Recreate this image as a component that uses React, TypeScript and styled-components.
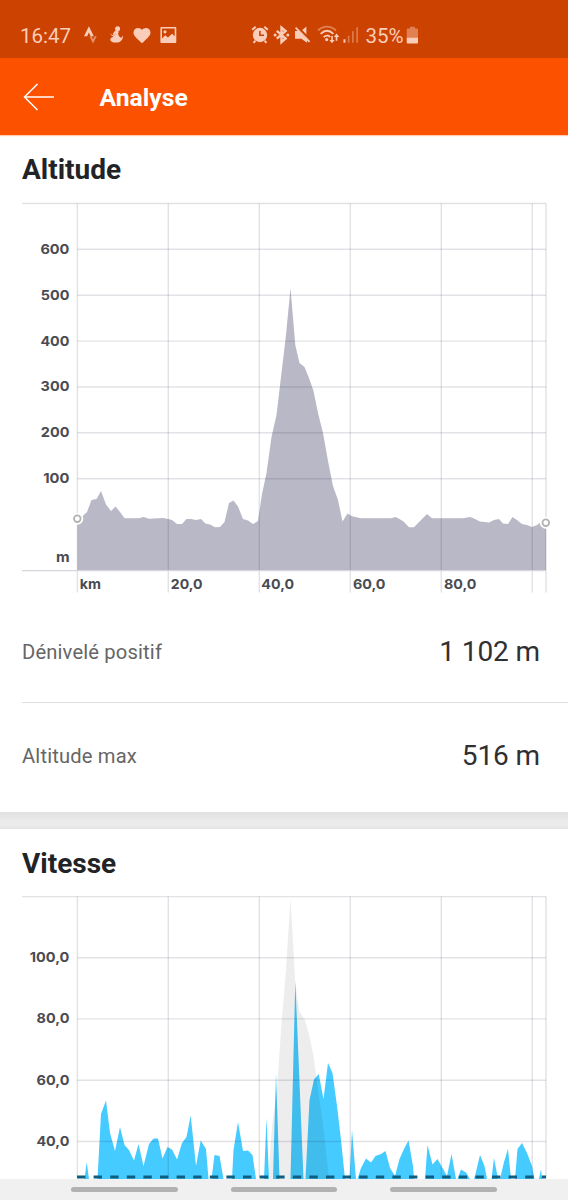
import React from 'react';
import styled, { createGlobalStyle } from 'styled-components';

const GlobalStyle = createGlobalStyle`
  * { box-sizing: border-box; }
  body { margin: 0; background: #fff; }
`;

const INK = '#f9cdb9';

const Screen = styled.div`
  width: 568px;
  height: 1200px;
  overflow: hidden;
  display: flex;
  flex-direction: column;
  background: #fff;
  font-family: Roboto, 'Liberation Sans', sans-serif;
`;

const StatusBar = styled.header`
  flex: 0 0 58px;
  display: flex;
  align-items: flex-start;
  padding: 24px 0 0 20px;
  background: #cc4200;
  color: ${INK};
`;

const StatusText = styled.span<{ $width: number; $gap?: number }>`
  width: ${(p) => p.$width}px;
  margin-left: ${(p) => p.$gap ?? 0}px;
  font-size: 20.5px;
  line-height: 25px;
  white-space: nowrap;
`;

const StatusIcon = styled.svg<{ $gap: number }>`
  display: block;
  flex: none;
  height: 22px;
  margin-left: ${(p) => p.$gap}px;
  fill: ${INK};
`;

const AppBar = styled.div`
  flex: 0 0 77px;
  display: flex;
  align-items: center;
  padding-left: 23px;
  background: #fc5200;
  color: #fff;
  box-shadow: 0 1px 1px rgba(252, 82, 0, 0.3);
`;

const BackArrow = styled.svg`
  width: 32px;
  height: 30px;
  fill: none;
  stroke: #fff;
  stroke-width: 1.5;
`;

const AppTitle = styled.h1`
  margin: 3px 0 0 44.5px;
  font-size: 24.7px;
  line-height: 30px;
  font-weight: 700;
`;

const Section = styled.section<{ $height?: number }>`
  flex: none;
  height: ${(p) => (p.$height ? `${p.$height}px` : 'auto')};
  overflow: hidden;
`;

const SectionTitle = styled.h2<{ $height: number }>`
  height: ${(p) => p.$height}px;
  margin: 0;
  padding: 18px 0 0 22px;
  font-size: 28px;
  line-height: 33px;
  font-weight: 700;
  color: #222326;
`;

const Chart = styled.svg`
  display: block;
  width: 568px;
  overflow: visible;
`;

const AxisText = styled.text`
  font: 700 13.6px Inter, 'Liberation Sans', sans-serif;
  fill: #4a4b52;
`;

const StatRow = styled.div<{ $divided?: boolean }>`
  height: ${(p) => (p.$divided ? 107 : 109)}px;
  margin-left: 22px;
  padding: ${(p) => (p.$divided ? '5px 28px 0 0' : '0 28px 4px 0')};
  display: flex;
  justify-content: space-between;
  align-items: center;
  border-bottom: ${(p) => (p.$divided ? '1px solid #dfdfdf' : '0')};
`;

const StatLabel = styled.span`
  font-size: 20.2px;
  letter-spacing: 0.15px;
  color: #666;
`;

const StatValue = styled.span`
  font-size: 28px;
  letter-spacing: -0.1px;
  color: #303033;
`;

const Band = styled.div`
  flex: 0 0 17px;
  background: linear-gradient(#e1e1e1, #ebebeb 55%, #ebebeb 80%, #e3e3e3);
`;

const NavBar = styled.nav`
  flex: 0 0 21px;
  display: flex;
  justify-content: center;
  gap: 53px;
  padding-top: 8px;
  background: #f0f0f0;
`;

const NavPill = styled.span`
  width: 106.5px;
  height: 5px;
  border-radius: 3px;
  background: #b2b2b2;
`;

type Point = [number, number];

const PLOT_LEFT = 77.4;
const PLOT_RIGHT = 546;
const VERTICALS = [77.4, 168.3, 259.3, 350.3, 441.3, 532.3, 546];

const toPath = (points: Point[]) => 'M' + points.map((p) => p.join(' ')).join('L') + 'Z';

const ALTITUDE: Point[] = [
  [77.4, 367.5], [77.4, 316], [83.3, 312.5], [87, 309], [91.5, 297], [96.5, 296], [101, 288], [106, 301.5],
  [111, 308], [115.5, 303.5], [120, 309], [124.5, 315.3], [139, 315.3], [143.5, 314], [149, 315.7],
  [163, 315], [168, 316], [172, 317], [177, 321], [182, 321], [186.5, 316], [191, 316], [196, 317],
  [201, 316], [205.5, 320.5], [210, 321.5], [215, 324.3], [220, 324], [224.5, 319], [229, 300],
  [233.5, 297.5], [238, 303.5], [243, 316], [248, 317.5], [253, 321], [258, 318], [262, 291],
  [266.5, 270], [271.5, 234], [276.5, 212], [281, 174], [286, 132], [290.5, 85], [295.3, 142],
  [299.5, 160], [304.5, 164], [309, 175], [313.5, 188], [318, 210], [323, 230], [328, 258],
  [333, 283], [338, 297], [342.5, 318.5], [347.5, 310.5], [352, 313.3], [361, 315.2], [391, 315.2],
  [395.5, 314], [399.5, 316], [403.5, 318.5], [409, 324.3], [414, 324.3], [418, 320], [427, 311],
  [432, 315.2], [463, 315.2], [470, 314], [474, 315.5], [480, 318.5], [489, 319.5], [494, 317],
  [499, 316], [503, 320.5], [508, 321], [512.5, 314], [517, 317], [522, 321], [527, 322],
  [532, 324], [537, 322], [541, 319], [546, 320], [546, 367.5],
];

const FLOOR = 283;

const RELIEF: Point[] = [
  [268, FLOOR], [272, 230], [277, 192], [281, 134], [286, 73], [290.5, 2], [295.3, 87], [299.5, 116],
  [304.5, 123], [309, 138], [313.5, 160], [318, 194], [323, 228], [329, FLOOR],
];

const SPEED: Point[][] = [
  [[84.5, FLOOR], [86.7, 266], [89, FLOOR]],
  [
    [97.5, FLOOR], [101, 218], [106, 204.5], [110, 237], [115, 255], [120, 231], [124.5, 249],
    [129, 254], [134, 264.5], [138.5, 248], [143.5, 270], [149, 248], [153.5, 242.5], [158, 242.5],
    [162.5, 262.5], [167.5, 251], [172, 253.5], [177, 263.5], [182, 247], [186.5, 241],
    [190.7, 219.5], [196, 270], [200.7, 244.5], [206, 253], [208.5, FLOOR],
  ],
  [[211.5, FLOOR], [214.5, 259], [219.5, 260], [223.5, FLOOR]],
  [[232, FLOOR], [233.5, 254], [238, 226], [243, 255], [248, 254.5], [252.5, 259], [256, FLOOR]],
  [[264, FLOOR], [266.5, 222], [269, FLOOR]],
  [[273, FLOOR], [276, 177], [279.5, FLOOR]],
  [[290.5, FLOOR], [295.3, 85], [303.5, FLOOR]],
  [
    [305.5, FLOOR], [309.5, 204], [314, 183.5], [318.7, 178], [323.5, 203], [328, 167], [332.5, 177],
    [337, 210], [341, 244], [345, FLOOR],
  ],
  [[349.5, FLOOR], [352, 234], [356, FLOOR]],
  [
    [357.5, FLOOR], [361, 272], [366, 262.5], [371, 266.5], [375.5, 260], [381, 258], [385.5, 255],
    [390, 272], [395, 280], [399.5, 263], [404, 253], [408.5, 244.5], [413, 270], [414, FLOOR],
  ],
  [
    [425, FLOOR], [427.5, 249], [432.5, 268.5], [437.5, 263], [442, 271], [447, 280], [451.5, 258],
    [456, FLOOR],
  ],
  [[457.5, FLOOR], [461, 273.5], [466, 276.5], [470, FLOOR]],
  [[474, FLOOR], [475, 280], [480, 259], [484.5, 270], [487, FLOOR]],
  [[491.5, FLOOR], [494, 262], [498, FLOOR]],
  [[500, FLOOR], [504, 266], [508, 253], [511, FLOOR]],
  [[515, FLOOR], [517.5, 253], [522, 247], [527, 257], [532, 270], [534.5, FLOOR]],
  [[539, FLOOR], [541, 273], [542, FLOOR]],
];

interface Row {
  y: number;
  label: string;
  width: number;
}

function Grid({ top, bottom, rows }: { top: number; bottom: number; rows: Row[] }) {
  return (
    <g stroke="#202040" strokeOpacity={0.13} strokeWidth={1.4}>
      <path d={`M22 ${top}H${PLOT_RIGHT}`} />
      {rows.map((r) => (
        <path key={r.y} d={`M${PLOT_LEFT} ${r.y}H${PLOT_RIGHT}`} />
      ))}
      {VERTICALS.map((x) => (
        <path key={x} d={`M${x} ${top}V${bottom}`} />
      ))}
    </g>
  );
}

interface AxisLabelProps {
  x: number;
  y: number;
  width: number;
  children: string;
}

function AxisLabel({ x, y, width, children }: AxisLabelProps) {
  return (
    <AxisText x={x} y={y} textLength={width} lengthAdjust="spacingAndGlyphs">
      {children}
    </AxisText>
  );
}

function RowLabels({ rows }: { rows: Row[] }) {
  return (
    <>
      {rows.map((r) => (
        <AxisLabel key={r.label} x={69.4 - r.width} y={r.y + 4.4} width={r.width}>
          {r.label}
        </AxisLabel>
      ))}
    </>
  );
}

const ALTITUDE_ROWS: Row[] = [
  { y: 46.2, label: '600', width: 29 },
  { y: 92.2, label: '500', width: 28.6 },
  { y: 138.1, label: '400', width: 29 },
  { y: 184, label: '300', width: 28.8 },
  { y: 229.8, label: '200', width: 28.6 },
  { y: 275.7, label: '100', width: 26.2 },
];

const KM_LABELS = [
  { x: 79.8, label: 'km', width: 21.2 },
  { x: 170.8, label: '20,0', width: 31.8 },
  { x: 261.3, label: '40,0', width: 32.8 },
  { x: 353, label: '60,0', width: 32.5 },
  { x: 444, label: '80,0', width: 32.5 },
];

const SPEED_ROWS: Row[] = [
  { y: 61.8, label: '100,0', width: 39.6 },
  { y: 122.9, label: '80,0', width: 32.8 },
  { y: 184.3, label: '60,0', width: 32.8 },
  { y: 245.5, label: '40,0', width: 33 },
];

function EndMarker({ x, y }: { x: number; y: number }) {
  return (
    <g>
      <circle cx={x} cy={y} r={6} fill="#fff" />
      <circle cx={x} cy={y} r={3.3} fill="#fff" stroke="#b2b2b2" strokeWidth={1.8} />
    </g>
  );
}

function AltitudeChart() {
  return (
    <Chart viewBox="0 0 568 393" height={393}>
      <path d={toPath(ALTITUDE)} fill="#b9b8c6" />
      <Grid top={0.5} bottom={389.5} rows={ALTITUDE_ROWS} />
      <path d={`M22 367.6H${PLOT_RIGHT}`} stroke="#d6d6de" strokeWidth={1.4} />
      <RowLabels rows={ALTITUDE_ROWS} />
      <AxisLabel x={55.9} y={359} width={13.6}>m</AxisLabel>
      {KM_LABELS.map((k) => (
        <AxisLabel key={k.label} x={k.x} y={386.4} width={k.width}>{k.label}</AxisLabel>
      ))}
      <EndMarker x={77.3} y={315.7} />
      <EndMarker x={545.8} y={319.7} />
    </Chart>
  );
}

function SpeedChart() {
  return (
    <Chart viewBox="0 0 568 283" height={283}>
      {SPEED.map((s, i) => (
        <path key={i} d={toPath(s)} fill="#45cbff" />
      ))}
      <path d={toPath(RELIEF)} fill="#000" fillOpacity={0.07} />
      <Grid top={0.6} bottom={282} rows={SPEED_ROWS} />
      <path
        d={`M77 281H${PLOT_RIGHT}`}
        stroke="#0c5f80"
        strokeWidth={3}
        strokeDasharray="8.4 8.2"
      />
      <RowLabels rows={SPEED_ROWS} />
    </Chart>
  );
}

function StatusIcons() {
  return (
    <>
      <StatusIcon $gap={12.7} width={14} viewBox="0 0 14 22">
        <path d="M0 12.2 4.9 2.2 9.8 12.2H6.7L4.9 8.4 3.1 12.2Z" />
        <path d="M5.4 12.2H7.6L9 15.2 10.5 12.2H12.8L9 19.6Z" opacity={0.55} />
      </StatusIcon>
      <StatusIcon $gap={11.3} width={15} viewBox="0 0 15 22">
        <circle cx="8.6" cy="4.8" r="2.5" />
        <path d="M6.7 6.4C4.9 7.5 3.6 9.6 4 11L8.4 10.6 9.8 8.2C9.7 7.2 8.4 6.2 6.7 6.4Z" />
        <path d="M.8 9.7 5 11.4 9 9.4 10 12.2 12.2 14 14 11.4C14.3 15.4 11.5 18.6 7.2 18.6 3.8 18.6 1 17.3 1.3 15.2 1.6 13.6 3.3 13.2 4.5 13Z" />
      </StatusIcon>
      <StatusIcon $gap={9.5} width={18} viewBox="0 0 18 22">
        <path d="M9 19.2 7.3 17.7C3.2 14.1.5 11.7.5 8.6.5 6 2.5 4 5 4 6.6 4 8.1 4.7 9 5.9 9.9 4.7 11.4 4 13 4 15.5 4 17.5 6 17.5 8.6 17.5 11.7 14.8 14.1 10.7 17.7Z" />
      </StatusIcon>
      <StatusIcon $gap={9} width={17} viewBox="0 0 17 22">
        <path
          fillRule="evenodd"
          d="M1.4 3H15.3Q16.3 3 16.3 4V18Q16.3 19 15.3 19H1.4Q.4 19 .4 18V4Q.4 3 1.4 3ZM2 4.6V14.6L5.2 11.2 8 13.6 12 9.8 14.7 12.2V4.6Z"
        />
        <circle cx="5" cy="7.8" r="1.6" />
      </StatusIcon>
      <StatusIcon $gap={74} width={18} viewBox="0 0 18 22">
        <path
          fillRule="evenodd"
          d="M9 3.8A7.2 7.2 0 1 1 9 18.2 7.2 7.2 0 0 1 9 3.8ZM8.1 7V12.1H13V10.6H9.7V7Z"
        />
        <path
          d="M1.2 5.7 4.7 2.8M13.3 2.8 16.8 5.7M4.4 16.7 2.6 18.8M13.6 16.7 15.4 18.8"
          stroke={INK}
          strokeWidth="2"
        />
      </StatusIcon>
      <StatusIcon $gap={4} width={17} viewBox="0 0 17 22">
        <path
          d="M3.8 6.8 12.6 14.4 8.5 18V3.5L12.6 7 3.8 14.6"
          fill="none"
          stroke={INK}
          strokeWidth="2.4"
        />
        <circle cx="2.1" cy="10.9" r="1.5" />
        <circle cx="14.8" cy="10.9" r="1.5" />
      </StatusIcon>
      <StatusIcon $gap={4} width={18} viewBox="0 0 18 22">
        <path d="M1 7H4.6L13 15.4V18.8L7.4 14.7H1Z" />
        <path d="M12.4 2.4V10.4L8.2 6.1Z" />
        <path d="M1.6 3.6 15.6 17.8" stroke={INK} strokeWidth="1.9" />
      </StatusIcon>
      <StatusIcon $gap={5} width={23} viewBox="0 0 23 22">
        <g fill="none" stroke={INK} strokeWidth="1.8">
          <path d="M1 6.5C6.5 1.3 13.5 1.3 19 6.5" opacity="0.45" />
          <path d="M3.6 9.9C7.7 6 12.4 6 16.4 9.9" />
          <path d="M6.6 13.2C8.8 11 11.3 11 13.2 13" />
        </g>
        <circle cx="9.7" cy="15.6" r="1.6" />
        <path d="M14.2 12V16H12.3L15 19.2 17.6 16H15.8V12Z" />
        <path d="M18.7 16.8V13H16.9L19.6 9.6 22.3 13H20.4V16.8Z" />
      </StatusIcon>
      <StatusIcon $gap={2.5} width={16} viewBox="0 0 16 22">
        <path d="M.5 15.2H2.4V18.7H.5Z" />
        <path d="M4.8 11.7H6.5V18.7H4.8ZM9 7.3H10.7V18.7H9ZM13.3 3.2H15V18.7H13.3Z" opacity="0.4" />
      </StatusIcon>
    </>
  );
}

function Battery() {
  return (
    <StatusIcon $gap={3} width={13} viewBox="0 0 13 22">
      <path d="M4 2.8H8.8V4.6H11Q12 4.6 12 5.6V14H.7V5.6Q.7 4.6 1.7 4.6H4Z" opacity="0.45" />
      <path d="M.7 13.8H12V18.6Q12 19.6 11 19.6H1.7Q.7 19.6.7 18.6Z" />
    </StatusIcon>
  );
}

export default function App() {
  return (
    <Screen>
      <GlobalStyle />
      <StatusBar>
        <StatusText $width={51}>16:47</StatusText>
        <StatusIcons />
        <StatusText $width={38} $gap={6.5}>35%</StatusText>
        <Battery />
      </StatusBar>
      <AppBar>
        <BackArrow viewBox="0 0 32 30">
          <path d="M31 15H1.5M14.5 2 1.5 15 14.5 28" />
        </BackArrow>
        <AppTitle>Analyse</AppTitle>
      </AppBar>
      <Section $height={677}>
        <SectionTitle $height={68}>Altitude</SectionTitle>
        <AltitudeChart />
        <StatRow $divided>
          <StatLabel>Dénivelé positif</StatLabel>
          <StatValue>1 102 m</StatValue>
        </StatRow>
        <StatRow>
          <StatLabel>Altitude max</StatLabel>
          <StatValue>516 m</StatValue>
        </StatRow>
      </Section>
      <Band />
      <Section $height={350}>
        <SectionTitle $height={67}>Vitesse</SectionTitle>
        <SpeedChart />
      </Section>
      <NavBar>
        <NavPill />
        <NavPill />
        <NavPill />
      </NavBar>
    </Screen>
  );
}
